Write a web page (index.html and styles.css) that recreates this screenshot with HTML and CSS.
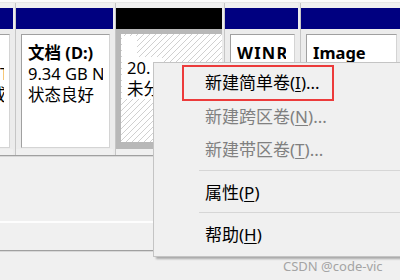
FILE: index.html
```html
<!DOCTYPE html>
<html lang="zh-CN">
<head>
<meta charset="utf-8">
<title>磁盘管理</title>
<link rel="stylesheet" href="styles.css">
</head>
<body>
<div class="screen">
  <div class="top-strip"></div>
  <div class="disk-row">
    <div class="part part-c1">
      <div class="bar bar-primary"></div>
      <div class="body">
        <div class="box box-clip">
          <div class="line bold">&nbsp;</div>
          <div class="line clip-line"><span class="clip-t">T</span></div>
          <div class="line clip-line"><span class="clip-c">成</span></div>
        </div>
      </div>
    </div>
    <div class="gap"></div>
    <div class="part part-c2">
      <div class="bar bar-primary"></div>
      <div class="body">
        <div class="box">
          <div class="line bold">文档 (D:)</div>
          <div class="line">9.34 GB NTFS</div>
          <div class="line">状态良好</div>
        </div>
      </div>
    </div>
    <div class="gap"></div>
    <div class="part part-c3 selected">
      <div class="bar bar-free"></div>
      <div class="body">
        <div class="hatch">
          <div class="line"><span class="blank"></span></div>
          <div class="line"><span class="opaque">20.</span></div>
          <div class="line"><span class="opaque">未分</span></div>
        </div>
      </div>
    </div>
    <div class="gap"></div>
    <div class="part part-c4">
      <div class="bar bar-primary"></div>
      <div class="body">
        <div class="box">
          <div class="line bold wide">WINRE</div>
        </div>
      </div>
    </div>
    <div class="gap"></div>
    <div class="part part-c5">
      <div class="bar bar-primary"></div>
      <div class="body">
        <div class="box">
          <div class="line bold">Image</div>
        </div>
      </div>
    </div>
  </div>
  <div class="hline"></div>
  <div class="lower"></div>
  <div class="white-line"></div>
  <div class="lower2"></div>
  <div class="hline"></div>
  <div class="rest"></div>

  <div class="menu">
    <div class="item">新建简单卷(<u>I</u>)...</div>
    <div class="item disabled">新建跨区卷(<u>N</u>)...</div>
    <div class="item disabled">新建带区卷(<u>T</u>)...</div>
    <div class="sep sep-a"></div>
    <div class="item">属性(<u>P</u>)</div>
    <div class="sep sep-b"></div>
    <div class="item">帮助(<u>H</u>)</div>
  </div>
  <div class="mark"></div>
  <div class="watermark">CSDN @code-vic</div>
</div>
</body>
</html>
```
FILE: styles.css
```css
* { box-sizing: border-box; }
html, body { margin: 0; padding: 0; }
body {
  width: 400px;
  height: 280px;
  overflow: hidden;
  background: #f0f0f0;
  font-family: "Noto Sans", "Noto Sans CJK SC", sans-serif;
  color: #000;
}
.screen {
  position: relative;
  width: 400px;
  height: 280px;
  overflow: hidden;
  display: flex;
  flex-direction: column;
}
.top-strip {
  height: 3px;
  background: #fbfbfb;
  border-bottom: 1px solid #e6e6e6;
  flex: none;
}
.disk-row {
  display: flex;
  height: 152px;
  flex: none;
  background: #f0f0f0;
  overflow: hidden;
}
.gap {
  flex: none;
  width: 3px;
  background: #ececec;
  border-right: 1px solid #c6c6c6;
}
.part {
  flex: none;
  display: flex;
  flex-direction: column;
  padding-top: 5px;
  overflow: hidden;
}
.part-c1 { width: 13px; }
.part-c2 { width: 97px; }
.part-c3 { width: 106px; }
.part-c4 { width: 73px; }
.part-c5 { flex: 1; }
.bar {
  height: 21px;
  flex: none;
}
.bar-primary { background: #000080; }
.bar-free { background: #000; }
.body {
  height: 120px;
  padding: 5px 3px 1px 5px;
  background: #ececec;
  display: flex;
}
.part-c1 .body { padding-left: 0; }
.box {
  flex: 1;
  background: #fff;
  border-top: 1px solid #a0a0a0;
  border-left: 1px solid #a0a0a0;
  border-right: 1px solid #d4d4d4;
  border-bottom: 1px solid #d4d4d4;
  padding: 7px 0 0 6px;
  overflow: hidden;
  min-width: 0;
}
.box-clip {
  border-left: none;
  padding: 7px 0 0 0;
}
.line {
  font-size: 16.5px;
  line-height: 21px;
  height: 21px;
  white-space: nowrap;
  overflow: hidden;
}
.box .line { margin-right: 6px; }
.part-c4 .box .line { margin-right: 8px; }
.box-clip .line { margin-right: 0; }
.bold { font-weight: bold; }
.wide { letter-spacing: 1.2px; }
.clip-line { width: 4px; }
.clip-t { display: inline-block; }
.clip-c { display: inline-block; margin-left: -10px; }

.selected .body {
  background: #b8b8b8;
  padding: 5px 0 7px 5px;
}
.hatch {
  flex: 1;
  padding: 2px 0 0 1px;
  background: repeating-linear-gradient(135deg, #ffffff 0 3.1px, #d0d0d0 3.1px 4.24px);
}
.hatch .line:first-child { height: 26px; margin-bottom: -5px; }
.blank {
  display: inline-block;
  width: 15px;
  height: 26px;
  background: #fff;
}
.opaque {
  display: inline-block;
  background: #fff;
  padding-left: 5px;
  width: 40px;
}

.hline {
  height: 2px;
  flex: none;
  background: #a0a0a0;
  border-bottom: 1px solid #d8d8d8;
}
.lower {
  height: 64px;
  flex: none;
  background: #f0f0f0;
}
.white-line {
  height: 2px;
  flex: none;
  background: #fdfdfd;
}
.lower2 {
  height: 27px;
  flex: none;
  background: #f0f0f0;
}
.rest {
  flex: 1;
  background: #f0f0f0;
}

.menu {
  position: absolute;
  left: 153px;
  top: 62px;
  width: 260px;
  background: #f0f0f0;
  border: 1px solid #c4c4c4;
  box-shadow: 3px 2px 2px rgba(0, 0, 0, 0.3);
  padding: 3px 0 4px 0;
}
.item {
  height: 33.5px;
  line-height: 33.5px;
  padding-left: 51px;
  font-size: 17px;
  color: #000;
  white-space: nowrap;
}
.item u {
  text-decoration-thickness: 1px;
  text-underline-offset: 2px;
}
.item.disabled { color: #808080; }
.sep {
  height: 9px;
  margin-left: 45px;
  position: relative;
}
.sep::after {
  content: "";
  position: absolute;
  left: 0;
  right: 0;
  top: 3px;
  height: 1px;
  background: #d6d6d6;
}
.mark {
  position: absolute;
  left: 182px;
  top: 65px;
  width: 152px;
  height: 36px;
  border: 2px solid #ec3b3b;
}
.watermark {
  position: absolute;
  left: 283px;
  top: 257px;
  font-size: 13px;
  line-height: 18px;
  color: #a4a4a4;
  white-space: nowrap;
}
```
